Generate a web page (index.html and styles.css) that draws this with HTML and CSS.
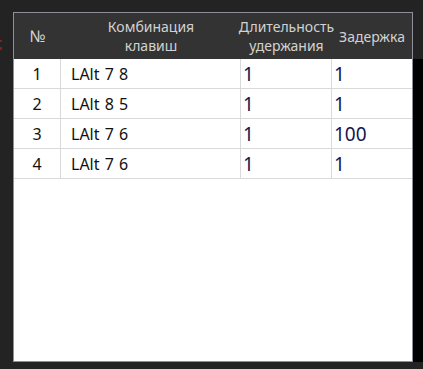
FILE: index.html
```html
<!DOCTYPE html>
<html lang="ru">

<head>
  <meta charset="UTF-8" />
  <meta name="viewport" content="width=device-width, initial-scale=1.0" />
  <title>Макросы</title>
  <link rel="stylesheet" href="styles.css">
</head>

<body>
  <div class="page">
    <div class="gutter">
      <svg class="mark" width="3" height="12" viewBox="0 0 3 12">
        <rect x="0" y="0" width="2" height="2" fill="#8c1c1c" />
        <rect x="0" y="7" width="2" height="3" fill="#8c1c1c" />
      </svg>
    </div>

    <div class="panel">
      <div class="grid head">
        <div class="hcell sign">№</div>
        <div class="hcell">Комбинация<br>клавиш</div>
        <div class="hcell">Длительность<br>удержания</div>
        <div class="hcell">Задержка</div>
      </div>
      <div class="rows">
        <div class="grid row">
          <div class="cell num">1</div>
          <div class="cell keys">LAlt 7 8</div>
          <div class="cell val">1</div>
          <div class="cell val">1</div>
        </div>
        <div class="grid row">
          <div class="cell num">2</div>
          <div class="cell keys">LAlt 8 5</div>
          <div class="cell val">1</div>
          <div class="cell val">1</div>
        </div>
        <div class="grid row">
          <div class="cell num">3</div>
          <div class="cell keys">LAlt 7 6</div>
          <div class="cell val">1</div>
          <div class="cell val">100</div>
        </div>
        <div class="grid row">
          <div class="cell num">4</div>
          <div class="cell keys">LAlt 7 6</div>
          <div class="cell val">1</div>
          <div class="cell val">1</div>
        </div>
      </div>
    </div>

    <div class="side"></div>
  </div>
</body>

</html>
```

FILE: styles.css
```css
* {
  box-sizing: border-box;
}

html,
body {
  margin: 0;
  height: 100%;
  background: #232323;
  font-family: "Noto Sans", sans-serif;
}

.page {
  display: flex;
  align-items: flex-start;
}

.gutter {
  width: 13px;
  padding-top: 40px;
}

.mark {
  display: block;
}

.panel {
  margin-top: 12px;
  width: 400px;
  height: 350px;
  border: 1px solid #8e8f9a;
  background: #fff;
  overflow: hidden;
}

.side {
  margin-top: 59px;
  width: 10px;
  height: 303px;
  background: #000;
}

.grid {
  display: grid;
  grid-template-columns: 47px 180px 91px 80px;
}

.head {
  height: 46px;
  background: #333333;
  color: #d2d2d2;
  font-size: 14px;
  line-height: 19px;
}

.hcell {
  display: flex;
  align-items: center;
  justify-content: center;
  text-align: center;
  white-space: nowrap;
}

.sign {
  font-size: 16px;
}

.row {
  height: 30px;
  border-bottom: 1px solid #d9d9d9;
}

.cell {
  display: flex;
  align-items: center;
  border-right: 1px solid #d9d9d9;
  white-space: nowrap;
}

.cell:last-child {
  border-right: none;
}

.num {
  justify-content: center;
  font-size: 16px;
  color: #111;
}

.keys {
  padding-left: 10px;
  font-size: 16px;
  word-spacing: 1px;
  color: #111;
}

.val {
  padding-left: 2px;
  font-size: 19px;
  color: #15154d;
}
```
